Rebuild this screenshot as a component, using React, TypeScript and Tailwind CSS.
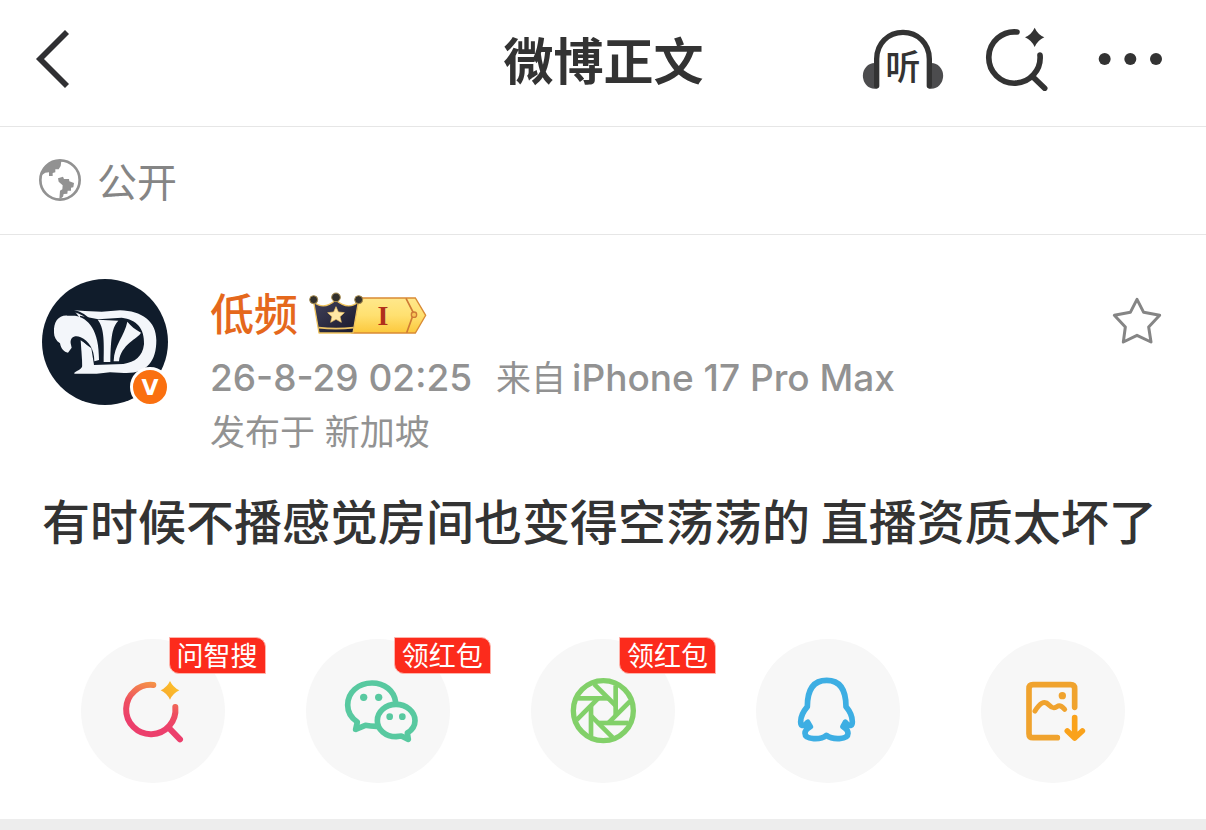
import React from "react";

const BackIcon = () => (
  <svg viewBox="105 93 105 174" className="h-[58px] w-[35px]" fill="none" stroke="#303033" strokeWidth="17">
    <path d="M201 99 L120 180 L201 261" />
  </svg>
);

const ListenIcon = () => (
  <svg viewBox="66 84 246 183" className="h-[61px] w-[82px]">
    <path d="M104 186 A35 38 0 0 0 104 263 H112 V186Z" fill="#4c4c4e" />
    <path d="M274 186 A35 38 0 0 1 274 263 H266 V186Z" fill="#4c4c4e" />
    <path
      d="M110 254 V174 C110 127 145 94 189 94 S268 127 268 174 V254"
      fill="none"
      stroke="#333"
      strokeWidth="16"
      strokeLinecap="round"
    />
    <text x="189" y="236" textAnchor="middle" fontSize="106" fontWeight="500" fill="#333">
      听
    </text>
  </svg>
);

const SmartSearchIcon = () => (
  <svg viewBox="435 81 192 192" className="size-16" fill="none" stroke="#333" strokeWidth="17" strokeLinecap="round">
    <path d="M531 96 A77 77 0 1 0 600 165" />
    <path d="M582 234 L614 265" />
    <path d="M584 83 Q593 103 613 112 Q593 121 584 141 Q575 121 555 112 Q575 103 584 83Z" fill="#333" stroke="none" />
  </svg>
);

const MoreIcon = () => (
  <svg viewBox="750 81 246 192" className="h-16 w-[82px]" fill="#333">
    <circle cx="794" cy="177" r="18" />
    <circle cx="871" cy="177" r="18" />
    <circle cx="948" cy="177" r="18" />
  </svg>
);

const GlobeIcon = () => (
  <svg viewBox="117 477 126 126" className="size-[42px]">
    <circle cx="180" cy="540" r="59" fill="none" stroke="#929292" strokeWidth="8" />
    <path
      d="M121 528 L136 518 L147 517 L147 528 L158 528 L158 519 L166 517 L166 508 L176 508 L182 498 L184 482 C152 478 126 500 121 528Z"
      fill="#929292"
    />
    <path
      d="M174 535 L189 530 L192 537 L207 537 L208 544 L222 549 L220 562 L213 563 L213 572 L203 572 L202 581 L191 582 L189 590 L184 594 L178 597 L180 572 L187 568 L188 556 L176 545Z"
      fill="#929292"
    />
  </svg>
);

const Avatar = () => (
  <div className="relative size-[126px] shrink-0">
    <svg viewBox="36 42 378 378" className="size-[126px] rounded-full bg-[#101c2b]">
      <path
        d="M132 136 L165 138 L215 140 L270 136 C335 138 379 168 379 226 C379 290 350 327 282 324 L240 322 L200 326 L133 326 C131 319 152 318 157 303 L158 235 L150 160Z"
        fill="#f3f6fa"
      />
      <path
        d="M150 152 L205 163 L275 158 C320 164 344 190 342 238 C338 274 315 292 280 297 L192 300 L184 250 L150 225 L148 180Z"
        fill="#101c2b"
      />
      <path d="M152 226 C172 238 184 258 188 301 L158 312Z" fill="#f3f6fa" />
      <path
        d="M72 203 C70 170 86 150 112 152 L135 152 C175 158 208 195 207 285 L193 289 C193 252 176 228 152 217 C135 209 120 217 122 235 L125 248 L114 263 C102 261 93 252 90 235 C78 227 72 215 72 203Z"
        fill="#f3f6fa"
      />
      <path d="M132 138 C168 146 204 180 212 240" fill="none" stroke="#101c2b" strokeWidth="6" />
      <path d="M203 164 L265 167 C247 187 243 210 241 291 L221 291 C223 220 221 187 203 164Z" fill="#f3f6fa" />
      <path d="M292 170 C302 182 316 194 333 203 C325 220 272 238 267 289 L251 289 C252 240 284 212 292 170Z" fill="#f3f6fa" />
    </svg>
    <span className="absolute -bottom-0.5 -right-0.5 flex size-10 items-center justify-center rounded-full border-[3px] border-white bg-[#fa7010] pt-0.5 font-['DejaVu_Sans',sans-serif] text-[22px] font-bold leading-none text-white">
      V
    </span>
  </div>
);

const VipBadge = () => (
  <svg viewBox="327 36 354 126" className="mb-1 h-[42px] w-[118px]">
    <defs>
      <linearGradient id="gold" x1="0" y1="0" x2="0" y2="1">
        <stop offset="0" stopColor="#ffe88c" />
        <stop offset="0.5" stopColor="#ffe070" />
        <stop offset="1" stopColor="#fcc83c" />
      </linearGradient>
      <linearGradient id="crown" x1="0" y1="0" x2="1" y2="1">
        <stop offset="0" stopColor="#42425a" />
        <stop offset="1" stopColor="#17172a" />
      </linearGradient>
    </defs>
    <path d="M484 54 H646 L677 106 L646 159 H456 L474 68Z" fill="url(#gold)" stroke="#d98a34" strokeWidth="4" />
    <path d="M618 55 L641 100 L620 158" fill="none" stroke="#cf7a35" strokeWidth="5" />
    <circle cx="642" cy="104" r="8" fill="#f8c455" stroke="#cf7a35" strokeWidth="4" />
    <path
      d="M341 66 Q372 92 407 60 Q444 92 475 66 L459 159 H357Z"
      fill="url(#crown)"
      stroke="#efc45f"
      strokeWidth="4"
      strokeLinejoin="round"
    />
    <path d="M356 143 Q408 149 461 143" fill="none" stroke="#edc465" strokeWidth="5" />
    <circle cx="341" cy="59" r="12" fill="#32302c" stroke="#a78b4d" strokeWidth="3" />
    <circle cx="408" cy="52" r="13" fill="#32302c" stroke="#a78b4d" strokeWidth="3" />
    <circle cx="476" cy="59" r="12" fill="#32302c" stroke="#a78b4d" strokeWidth="3" />
    <path
      d="M408 80 L415 96 L433 98 L420 110 L424 127 L408 118 L392 127 L396 110 L383 98 L401 96Z"
      fill="#ffe7a6"
      stroke="#f5c766"
      strokeWidth="2"
    />
    <text
      x="549"
      y="134"
      textAnchor="middle"
      fontFamily="Liberation Serif, serif"
      fontSize="84"
      fontWeight="700"
      fill="#b1301b"
    >
      I
    </text>
  </svg>
);

const StarIcon = () => (
  <svg viewBox="60 48 162 150" className="h-[50px] w-[54px]" fill="none" stroke="#858585" strokeWidth="9">
    <path
      d="M141 58 L161 97 L209 106 L176 141 L183 186 L141 166 L100 186 L106 141 L73 106 L121 97Z"
      strokeLinejoin="round"
    />
  </svg>
);

const AskIcon = () => (
  <svg viewBox="33 42 432 432" className="size-36" fill="none" stroke="url(#ask)" strokeWidth="18" strokeLinecap="round">
    <defs>
      <linearGradient id="ask" gradientUnits="userSpaceOnUse" x1="270" y1="170" x2="235" y2="300">
        <stop offset="0" stopColor="#f69a45" />
        <stop offset="0.6" stopColor="#ee4e60" />
        <stop offset="1" stopColor="#ec3f6c" />
      </linearGradient>
      <linearGradient id="spark" x1="0" y1="1" x2="1" y2="0">
        <stop offset="0" stopColor="#f8a62c" />
        <stop offset="1" stopColor="#fcc52c" />
      </linearGradient>
    </defs>
    <path d="M250 180 A74 74 0 1 0 316 246" />
    <path d="M298 310 L330 343" />
    <path
      d="M300 168 Q309 187 328 196 Q309 205 300 224 Q291 205 272 196 Q291 187 300 168Z"
      fill="url(#spark)"
      stroke="none"
    />
  </svg>
);

const WechatIcon = () => (
  <svg
    viewBox="33 42 432 432"
    className="size-36"
    fill="none"
    stroke="#58c9a0"
    strokeWidth="17"
    strokeLinecap="round"
    strokeLinejoin="round"
  >
    <path d="M302 232 C298 197 268 174 231 174 C190 174 158 202 158 240 C158 261 169 279 187 291 L182 313 L211 301 Q226 304 245 304" />
    <path d="M303 238 C272 238 247 260 247 287 C247 314 272 335 303 335 L319 333 L340 343 L337 324 C351 315 360 302 360 287 C360 260 334 238 303 238Z" />
    <g fill="#58c9a0" stroke="none">
      <circle cx="206" cy="217" r="11" />
      <circle cx="251" cy="217" r="11" />
      <circle cx="284" cy="275" r="10" />
      <circle cx="322" cy="275" r="10" />
    </g>
  </svg>
);

const bladeAngles = [0, 45, 90, 135, 180, 225, 270, 315];

const MomentsIcon = () => (
  <svg viewBox="33 42 432 432" className="size-36" fill="none" stroke="#82d069" strokeWidth="16">
    <circle cx="250" cy="257" r="90" />
    {bladeAngles.map((angle) => (
      <path key={angle} d="M265 220 H174" strokeWidth="14" transform={`rotate(${angle} 250 257)`} />
    ))}
  </svg>
);

const QQIcon = () => (
  <svg
    viewBox="33 42 432 432"
    className="size-36"
    fill="none"
    stroke="#3daee3"
    strokeWidth="17"
    strokeLinecap="round"
    strokeLinejoin="round"
  >
    <path d="M187 245 C187 195 205 166 245 166 C285 166 303 195 303 245 C314 258 322 270 322 290 C322 302 316 304 308 299 L301 292 L294 305 C305 312 309 316 309 325 C309 345 262 345 244 331 C228 345 180 345 180 325 C180 316 185 312 196 305 L188 292 L181 299 C172 304 167 302 167 290 C167 270 176 258 187 245Z" />
  </svg>
);

const SaveImageIcon = () => (
  <svg
    viewBox="708 42 432 432"
    className="size-36"
    fill="none"
    stroke="#f0a32e"
    strokeWidth="17"
    strokeLinecap="round"
    strokeLinejoin="round"
  >
    <path d="M937 338 H864 Q852 338 852 326 V191 Q852 179 864 179 H977 Q989 179 989 191 V247" />
    <path d="M870 258 C884 235 898 224 912 240 C925 254 930 248 937 244 C945 239 952 245 959 253" strokeWidth="15" />
    <circle cx="952" cy="212" r="11" fill="#f0a32e" stroke="none" />
    <path d="M989 278 V338 M967 318 L989 339 L1012 318" stroke="#faa21b" />
  </svg>
);

const shareActions = [
  { label: "智搜", tag: "问智搜", Icon: AskIcon },
  { label: "微信", tag: "领红包", Icon: WechatIcon },
  { label: "朋友圈", tag: "领红包", Icon: MomentsIcon },
  { label: "QQ", tag: null, Icon: QQIcon },
  { label: "保存图片", tag: null, Icon: SaveImageIcon },
];

const App: React.FC = () => (
  <div className="flex min-h-screen flex-col bg-white font-['Inter','Noto_Sans_CJK_SC',sans-serif]">
    <header className="grid h-[127px] grid-cols-[1fr_auto_1fr] items-center border-b border-[#e6e6e6] pb-2 pl-[35px] pr-[34px]">
      <button aria-label="返回" className="justify-self-start">
        <BackIcon />
      </button>
      <h1 className="pt-1.5 text-[50px] font-bold leading-[60px] text-[#333]">微博正文</h1>
      <div className="flex items-center gap-[41px] justify-self-end">
        <button aria-label="听微博">
          <ListenIcon />
        </button>
        <button aria-label="搜索">
          <SmartSearchIcon />
        </button>
        <button aria-label="更多">
          <MoreIcon />
        </button>
      </div>
    </header>

    <div className="flex h-[108px] items-center gap-4 border-b border-[#e6e6e6] px-[39px] pb-0.5 text-[40px] leading-[60px] text-[#858585]">
      <GlobeIcon />
      <span className="pt-1.5">公开</span>
    </div>

    <article className="pb-9 pt-11">
      <div className="flex items-start px-[42px]">
        <Avatar />
        <div className="ml-[42px] mt-2 grow text-[35px] leading-[54px] text-[#929292]">
          <div className="flex h-14 items-center gap-[11px]">
            <a href="#" className="text-[44px] font-medium leading-[56px] text-[#e5681c]">
              低频
            </a>
            <VipBadge />
          </div>
          <p className="mt-2 flex gap-6">
            <time className="text-[37px] font-medium">26-8-29 02:25</time>
            <span className="flex gap-1.5">
              <span>来自</span>
              <span className="text-[37px] font-medium">iPhone 17 Pro Max</span>
            </span>
          </p>
          <p>发布于 新加坡</p>
        </div>
        <button aria-label="收藏" className="mt-[17px]">
          <StarIcon />
        </button>
      </div>

      <p className="mt-7 px-[42px] font-['Noto_Sans_CJK_SC',sans-serif] text-[48px] font-medium leading-[64px] text-[#333]">
        有时候不播感觉房间也变得空荡荡的 直播资质太坏了
      </p>

      <div className="mt-[88px] grid grid-cols-5 justify-items-center px-10">
        {shareActions.map(({ label, tag, Icon }) => (
          <button key={label} aria-label={label} className="relative size-36 rounded-full bg-[#f7f7f7]">
            <Icon />
            {tag && (
              <span className="absolute -top-0.5 left-[88px] flex h-[37px] w-[97px] items-center justify-center rounded-bl-[10px] rounded-tr-[10px] border border-[#ffb3ab] bg-[#fc2b1c] pt-0.5 text-[27px] leading-none text-white">
                {tag}
              </span>
            )}
          </button>
        ))}
      </div>
    </article>

    <div className="min-h-[11px] grow bg-[#ededed]" />
  </div>
);

export default App;
